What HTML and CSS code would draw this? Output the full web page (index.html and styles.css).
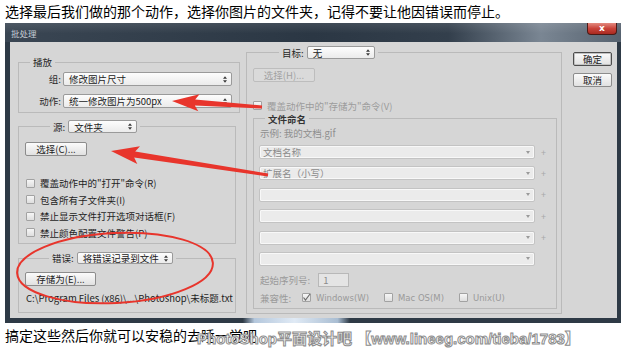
FILE: index.html
```html
<!DOCTYPE html>
<html lang="zh-CN">
<head>
  <meta charset="UTF-8">
  <title>批处理</title>
  <link rel="stylesheet" href="styles.css">
</head>
<body>
  <p class="note">选择最后我们做的那个动作，选择你图片的文件夹，记得不要让他因错误而停止。</p>

  <div class="window">
    <div class="titlebar">
      <span class="title">批处理</span>
      <span class="close">x</span>
    </div>

    <div class="dialog">
      <!-- left column: play / source / errors -->
      <div class="col-left">
        <fieldset class="group play">
          <legend>播放</legend>
          <div class="fields">
            <label>组:</label>
            <span class="select">修改图片尺寸<svg class="spin" viewBox="0 0 5 8"><path d="M2.5 0L5 3H0zM2.5 8L0 5h5z"/></svg></span>
            <label>动作:</label>
            <span class="select">统一修改图片为500px<svg class="spin" viewBox="0 0 5 8"><path d="M2.5 0L5 3H0zM2.5 8L0 5h5z"/></svg></span>
          </div>
        </fieldset>

        <fieldset class="group source">
          <legend><label>源:</label><span class="select">文件夹<svg class="spin" viewBox="0 0 5 8"><path d="M2.5 0L5 3H0zM2.5 8L0 5h5z"/></svg></span></legend>
          <div class="group-body">
            <button class="btn">选择(C)...</button>
            <ul class="checks">
              <li><span class="box"></span>覆盖动作中的"打开"命令(R)</li>
              <li><span class="box"></span>包含所有子文件夹(I)</li>
              <li><span class="box"></span>禁止显示文件打开选项对话框(F)</li>
              <li><span class="box"></span>禁止颜色配置文件警告(P)</li>
            </ul>
          </div>
        </fieldset>

        <fieldset class="group errors">
          <legend><label>错误:</label><span class="select">将错误记录到文件<svg class="spin" viewBox="0 0 5 8"><path d="M2.5 0L5 3H0zM2.5 8L0 5h5z"/></svg></span></legend>
          <div class="group-body">
            <button class="btn">存储为(E)...</button>
            <p class="path">C:\Program Files (x86)\...\Photoshop\未标题.txt</p>
          </div>
        </fieldset>
      </div>

      <!-- right column: destination -->
      <fieldset class="group target">
        <legend><label>目标:</label><span class="select">无<svg class="spin" viewBox="0 0 5 8"><path d="M2.5 0L5 3H0zM2.5 8L0 5h5z"/></svg></span></legend>
        <div class="group-body">
          <button class="btn" disabled>选择(H)...</button>
          <div class="check disabled"><span class="box"></span>覆盖动作中的"存储为"命令(V)</div>

          <fieldset class="group naming">
            <legend>文件命名</legend>
            <div class="group-body">
              <p class="sample">示例: 我的文档.gif</p>
              <div class="combos">
                <div class="combo-row"><span class="combo">文档名称<i class="drop"></i></span><span class="plus">+</span></div>
                <div class="combo-row"><span class="combo">扩展名（小写）<i class="drop"></i></span><span class="plus">+</span></div>
                <div class="combo-row"><span class="combo"><i class="drop"></i></span><span class="plus">+</span></div>
                <div class="combo-row"><span class="combo"><i class="drop"></i></span><span class="plus">+</span></div>
                <div class="combo-row"><span class="combo"><i class="drop"></i></span><span class="plus">+</span></div>
                <div class="combo-row"><span class="combo"><i class="drop"></i></span></div>
              </div>
              <div class="serial"><span>起始序列号:</span><span class="input">1</span></div>
              <div class="compat">
                <span class="label">兼容性:</span>
                <span class="opt"><span class="box checked"><svg viewBox="0 0 9 9"><path d="M1.5 4.5L3.5 7L8 1"/></svg></span>Windows(W)</span>
                <span class="opt"><span class="box"></span>Mac OS(M)</span>
                <span class="opt"><span class="box"></span>Unix(U)</span>
              </div>
            </div>
          </fieldset>
        </div>
      </fieldset>

      <div class="actions">
        <button class="btn primary">确定</button>
        <button class="btn">取消</button>
      </div>
    </div>
  </div>

  <div class="footer">
    <p class="note">搞定这些然后你就可以安稳的去睡一觉吧</p>
    <span class="watermark">PhotoShop平面设计吧 【www.lineeg.com/tieba/1783】</span>
  </div>

  <!-- red hand-drawn marks on top of the screenshot -->
  <svg class="marks" width="621" height="358" viewBox="0 0 621 358">
    <polygon points="172,101 199.5,94.3 195.2,99.5 262.1,105.5 261.9,108.5 194.8,105.5 198.3,111.3"/>
    <polygon points="111,151 140,146.3 135.2,151.6 268.2,173.5 267.8,176.5 134.2,157.6 137.3,164.1"/>
    <ellipse cx="115" cy="268" rx="98" ry="35" transform="rotate(-3 115 268)"/>
  </svg>
</body>
</html>
```

FILE: styles.css
```css
/* Base */
* {
  margin: 0;
  padding: 0;
  box-sizing: border-box;
}

body {
  position: relative;
  width: 621px;
  height: 358px;
  overflow: hidden;
  background: #fff;
  color: #000;
  font-family: "Noto Sans CJK SC", "DejaVu Sans", sans-serif;
}

.note {
  height: 23px;
  padding-left: 5px;
  font-size: 14px;
  line-height: 22px;
  white-space: nowrap;
}

/* Window frame */
.window {
  width: 616px;
  margin-left: 5px;
  padding: 0 4px 5px 5px;
  background: linear-gradient(to right, #2e3a46 0%, #2e3a46 38.6%, #b4c7dc 40.5%, #e0eaf5 47%, #a9bdd2 54%, #2e3a46 56%, #2e3a46 100%);
}

.titlebar {
  display: flex;
  justify-content: space-between;
  align-items: flex-start;
  height: 19px;
  margin: 0 -4px 0 -5px;
  padding-right: 4px;
  background:
    linear-gradient(rgba(255, 255, 255, 0.1), rgba(255, 255, 255, 0) 55%),
    linear-gradient(to right, #3a4653 0%, #2b3744 50%, #333f4c 72%, #7a8693 87%, #56626f 100%);
}

.title {
  padding: 5px 0 0 6px;
  font-size: 8.5px;
  line-height: 10px;
  color: #c5ccd4;
}

.close {
  width: 30px;
  height: 12px;
  border: 1px solid #4b1a16;
  border-top: 0;
  border-radius: 0 0 4px 4px;
  background: linear-gradient(#e38a7f, #c9433a 50%, #a92a20);
  color: #fff;
  font: bold 9px/11px "DejaVu Sans", sans-serif;
  text-align: center;
}

/* Dialog body */
.dialog {
  display: grid;
  grid-template-columns: 222px 316px 49px;
  column-gap: 6px;
  align-items: start;
  height: 276px;
  padding-left: 8px;
  overflow: hidden;
  background: #d6d6d6;
  font-size: 9.5px;
  color: #2b2b2b;
}

.group {
  min-width: 0;
  border: 1px solid #bababa;
}

.group legend {
  display: flex;
  align-items: center;
  gap: 3px;
  padding: 0 3px;
  line-height: 12px;
  color: #262626;
}

.select {
  display: flex;
  align-items: center;
  justify-content: space-between;
  height: 14px;
  padding: 0 4px 0 5px;
  border: 1px solid #9a9a9a;
  border-radius: 2px;
  background: linear-gradient(#fdfdfd, #ebebeb);
  color: #1a1a1a;
  line-height: 12px;
  white-space: nowrap;
}

.spin {
  width: 4px;
  height: 7px;
  fill: #3a3a3a;
}

.btn {
  display: block;
  height: 14px;
  border: 1px solid #8c8c8c;
  border-radius: 2px;
  background: linear-gradient(#fbfbfb, #e1e1e1);
  font: inherit;
  line-height: 12px;
  color: #222;
  text-align: center;
}

.btn.primary {
  border-color: #4d4d4d;
  box-shadow: inset 0 0 0 1px #c2c2c2;
}

.btn:disabled {
  border-color: #bdbdbd;
  background: #dadada;
  color: #a2a2a2;
}

.box {
  flex: none;
  width: 9px;
  height: 9px;
  border: 1px solid #a2a2a2;
  border-radius: 1px;
  background: linear-gradient(#f6f6f6, #dedede);
}

.box svg {
  display: block;
  width: 9px;
  height: 9px;
  margin: -1px 0 0 -1px;
  fill: none;
  stroke: #6b6b6b;
  stroke-width: 1.2;
}

/* Left column */
.col-left {
  display: flex;
  flex-direction: column;
}

.play {
  margin-top: 14px;
}

.play legend {
  height: 12px;
  margin-left: 11px;
}

.fields {
  display: grid;
  grid-template-columns: 42px 169px;
  column-gap: 2px;
  row-gap: 8px;
  align-items: center;
  padding: 4px 0;
}

.fields label {
  text-align: right;
}

.source,
.errors {
  width: 218px;
  margin-top: 7px;
}

.source legend {
  height: 13px;
  margin-left: 31px;
}

.source .select {
  width: 69px;
  height: 13px;
}

.source .group-body {
  padding: 9px 0 2px 6px;
}

.source .btn {
  width: 62px;
}

.checks {
  margin-top: 19px;
  list-style: none;
  color: #1e1e1e;
}

.checks li {
  display: flex;
  align-items: center;
  gap: 5px;
  height: 16.5px;
  padding-left: 1px;
}

.errors {
  margin-top: 8px;
}

.errors legend {
  height: 12px;
  margin-left: 30px;
}

.errors .select {
  width: 96px;
  height: 12px;
}

.errors .group-body {
  padding: 8px 0 8px 6px;
}

.errors .btn {
  width: 71px;
}

.path {
  margin-top: 6px;
  padding-left: 1px;
  line-height: 12px;
  white-space: nowrap;
  color: #1e1e1e;
}

/* Right column */
.target {
  margin-top: 4px;
}

.target > legend {
  height: 13px;
  margin-left: 32px;
}

.target > legend .select {
  width: 68px;
  height: 13px;
}

.target > .group-body {
  padding-bottom: 4px;
}

.target > .group-body > .btn {
  width: 62px;
  margin: 9px 0 0 6px;
}

.check {
  display: flex;
  align-items: center;
  gap: 5px;
  height: 13px;
  margin-top: 17px;
  padding-left: 6px;
}

.disabled {
  color: #9c9c9c;
}

.naming {
  margin: 0 4px 0 6px;
}

.naming legend {
  height: 13px;
  margin-left: 11px;
  font-weight: bold;
  color: #333;
}

.naming .group-body {
  padding: 0 0 4px 5px;
}

.sample {
  margin-top: 2px;
  padding-left: 1px;
  line-height: 12px;
  color: #8e8e8e;
}

.combos {
  display: flex;
  flex-direction: column;
  gap: 7.4px;
  margin-top: 6px;
}

.combo-row {
  display: flex;
  align-items: center;
}

.combo {
  display: flex;
  align-items: center;
  width: 276px;
  height: 14px;
  padding: 0 4px 0 3px;
  border: 1px solid #c3c3c3;
  border-radius: 2px;
  background: #ebebeb;
  box-shadow: inset 0 0 0 1px #f8f8f8;
  color: #8a8a8a;
  line-height: 12px;
}

.drop {
  width: 0;
  height: 0;
  margin-left: auto;
  border-left: 2.5px solid transparent;
  border-right: 2.5px solid transparent;
  border-top: 3px solid #9a9a9a;
}

.plus {
  margin-left: 6px;
  font-size: 9px;
  color: #a8a8a8;
}

.serial {
  display: flex;
  align-items: center;
  gap: 8px;
  margin-top: 7px;
  padding-left: 1px;
  color: #9a9a9a;
}

.input {
  width: 31px;
  height: 14px;
  padding-left: 4px;
  border: 1px solid #b8b8b8;
  background: #e4e4e4;
  line-height: 12px;
  color: #8a8a8a;
}

.compat {
  display: flex;
  align-items: center;
  height: 12px;
  margin-top: 5px;
  padding-left: 1px;
  color: #9a9a9a;
}

.compat .label {
  width: 42px;
}

.opt {
  display: flex;
  align-items: center;
  gap: 5px;
  margin-right: 15px;
  font-family: "DejaVu Sans", sans-serif;
  font-size: 8.5px;
}

/* Buttons column */
.actions {
  display: flex;
  flex-direction: column;
  gap: 7px;
  padding: 10px 5px 0;
}

/* Below the window */
.footer {
  position: relative;
  height: 35px;
}

.footer .note {
  padding-top: 1px;
}

.watermark {
  position: absolute;
  left: 197px;
  top: 7px;
  font: bold 15px/18px "Liberation Sans", "Noto Sans CJK SC", sans-serif;
  color: #fff;
  -webkit-text-stroke: 1px #8c8c8c;
  white-space: nowrap;
}

.marks {
  position: absolute;
  top: 0;
  left: 0;
  fill: #e8352c;
}

.marks ellipse {
  fill: none;
  stroke: #e8352c;
  stroke-width: 2;
}
```
